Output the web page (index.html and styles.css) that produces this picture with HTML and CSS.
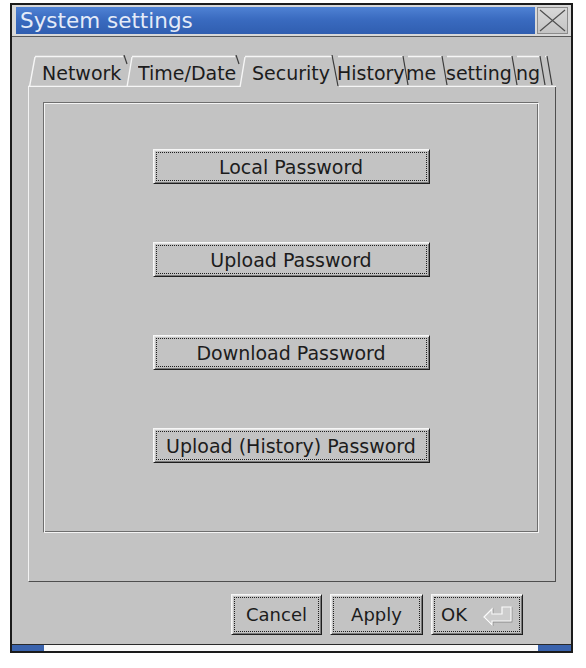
FILE: index.html
```html
<!DOCTYPE html>
<html>
<head>
<meta charset="utf-8">
<link rel="stylesheet" href="styles.css">
</head>
<body>
<div class="window">
  <div class="titlewrap">
    <div class="title">System settings</div>
    <div class="close">
      <svg width="29" height="25" viewBox="0 0 29 25"><path d="M2 2 L27 23 M27 2 L2 23" stroke="#505050" stroke-width="1.2" fill="none"/></svg>
    </div>
  </div>
  <div class="body">
    <div class="tabstrip">
      <span class="tab t1">Network</span>
      <span class="tab t2">Time/Date</span>
      <span class="tab t3">Security</span>
      <span class="tab t4">History</span>
      <span class="tab t5">me</span>
      <span class="tab t6">setting</span>
      <span class="tab t7">ng</span>
      <svg class="tablines" width="528" height="32" viewBox="0 0 528 32">
        <g stroke="#f6f6f6" stroke-width="1.4" fill="none">
          <path d="M1.5 32 L7 2 M7 1.5 H95"/>
          <path d="M99 32 L104 2 M104 1.5 H207"/>
          <path d="M212 32 L217 2 M217 1.5 H304"/>
          <path d="M310 1.5 H375 M380 1.5 H414 M419 1.5 H484 M489 1.5 H512 M517 1.5 H519"/>
          <path d="M0 31.5 H212 M311 31.5 H528"/>
        </g>
        <g stroke="#3c3c3c" stroke-width="1.2" fill="none">
          <path d="M96 0 L99 9"/>
          <path d="M208 0 L211 9"/>
          <path d="M304 0 L310 31"/>
          <path d="M375 1 L380 30"/>
          <path d="M414 1 L419 30"/>
          <path d="M484 1 L489 30"/>
          <path d="M512 1 L517 30"/>
          <path d="M519 1 L524 30"/>
        </g>
      </svg>
    </div>
    <div class="pane">
      <div class="group">
        <button class="btn pbtn"><span class="focus">Local Password</span></button>
        <button class="btn pbtn"><span class="focus">Upload Password</span></button>
        <button class="btn pbtn"><span class="focus">Download Password</span></button>
        <button class="btn pbtn"><span class="focus">Upload (History) Password</span></button>
      </div>
    </div>
    <div class="actions">
      <button class="btn abtn cancel"><span class="focus">Cancel</span></button>
      <button class="btn abtn apply"><span class="focus">Apply</span></button>
      <button class="btn abtn ok"><span class="focus okf">OK
        <svg class="enter" width="32" height="22" viewBox="0 0 32 22">
          <polygon points="3,13 11,5 11,10 21,10 21,3 30,3 30,17 11,17 11,21" fill="#d2d2d2" stroke="#8a8a8a" stroke-width="1.2" transform="translate(0.8,0.8)"/>
          <polygon points="3,13 11,5 11,10 21,10 21,3 30,3 30,17 11,17 11,21" fill="#cdcdcd" stroke="#fbfbfb" stroke-width="1.2"/>
        </svg></span></button>
    </div>
  </div>
  <div class="strip">
    <div class="blue left"></div>
    <div class="white"></div>
    <div class="blue right"></div>
  </div>
</div>
</body>
</html>
```
FILE: styles.css
```css
body {
  margin: 0;
  background: #ffffff;
  font-family: "DejaVu Sans", "Noto Sans", sans-serif;
}

.window {
  margin: 3px 0 0 10px;
  width: 563px;
  height: 650px;
  box-sizing: border-box;
  border: 2px solid #1b1b1b;
  background: #c3c3c3;
  display: flex;
  flex-direction: column;
}

.titlewrap {
  display: flex;
  height: 32px;
  box-sizing: border-box;
  padding: 2px 3px 2px 4px;
  background: #d8d8d8;
  border-bottom: 1px solid #5a5a5a;
}

.title {
  flex: 1;
  background: linear-gradient(to bottom, #4f82d4 0%, #3a6bc0 45%, #305eb0 100%);
  color: #e4ebf8;
  font-size: 21.5px;
  line-height: 27px;
  padding-left: 4px;
  white-space: nowrap;
}

.close {
  width: 31px;
  margin-left: 2px;
  box-sizing: border-box;
  border: 1px solid #8c8c8c;
  background: linear-gradient(to bottom, #d8d8d8, #c4c4c4);
  display: flex;
  align-items: center;
  justify-content: center;
}

.body {
  padding: 18px 15px 9px 16px;
  display: flex;
  flex-direction: column;
}

.tabstrip {
  position: relative;
  height: 32px;
  box-sizing: border-box;
  display: flex;
  padding: 5px 0 0 14px;
  font-size: 19px;
  line-height: 27px;
  color: #1c1c1c;
}

.tab {
  display: block;
  overflow: hidden;
  white-space: nowrap;
}

.t1 { width: 96px; }
.t2 { width: 114px; }
.t3 { width: 85px; }
.t4 { width: 69px; }
.t5 { width: 40px; }
.t6 { width: 70px; }
.t7 { width: 24px; }

.tablines {
  position: absolute;
  left: 0;
  top: 0;
  pointer-events: none;
}

.pane {
  height: 495px;
  box-sizing: border-box;
  border-left: 1px solid #f2f2f2;
  border-right: 1px solid #4e4e4e;
  border-bottom: 1px solid #4e4e4e;
  padding: 15px 0 0 14px;
}

.group {
  width: 496px;
  height: 431px;
  box-sizing: border-box;
  border: 1px solid;
  border-color: #6e6e6e #f4f4f4 #f4f4f4 #6e6e6e;
  box-shadow: inset 1px 1px #f4f4f4, inset -1px -1px #6e6e6e;
  display: flex;
  flex-direction: column;
  align-items: center;
  padding-top: 46px;
  gap: 58px;
}

.btn {
  margin: 0;
  padding: 2px;
  box-sizing: border-box;
  background: #c3c3c3;
  border: 1px solid;
  border-color: #f6f6f6 #1e1e1e #1e1e1e #f6f6f6;
  box-shadow: inset 1px 1px #e6e6e6, inset -1px -1px #7a7a7a;
  font-family: "DejaVu Sans", "Noto Sans", sans-serif;
  color: #1c1c1c;
  display: block;
}

.focus {
  display: flex;
  align-items: center;
  justify-content: center;
  height: 100%;
  box-sizing: border-box;
  border: 1px dotted #1e1e1e;
  white-space: nowrap;
}

.pbtn {
  width: 277px;
  height: 35px;
  font-size: 19px;
}

.actions {
  display: flex;
  justify-content: flex-end;
  gap: 8px;
  margin-top: 12px;
  padding-right: 33px;
}

.abtn {
  height: 41px;
  font-size: 18px;
}

.cancel { width: 91px; }
.apply { width: 93px; }
.ok { width: 92px; }

.okf {
  justify-content: flex-start;
  padding-left: 6px;
}

.enter {
  margin-left: 14px;
}

.strip {
  height: 7px;
  box-sizing: border-box;
  border-top: 1px solid #2a2a2a;
  display: flex;
}

.strip .white {
  flex: 1;
  background: #f8f8f8;
}

.strip .blue {
  background: #3a63ad;
}

.strip .left { width: 32px; }
.strip .right { width: 33px; }
```
